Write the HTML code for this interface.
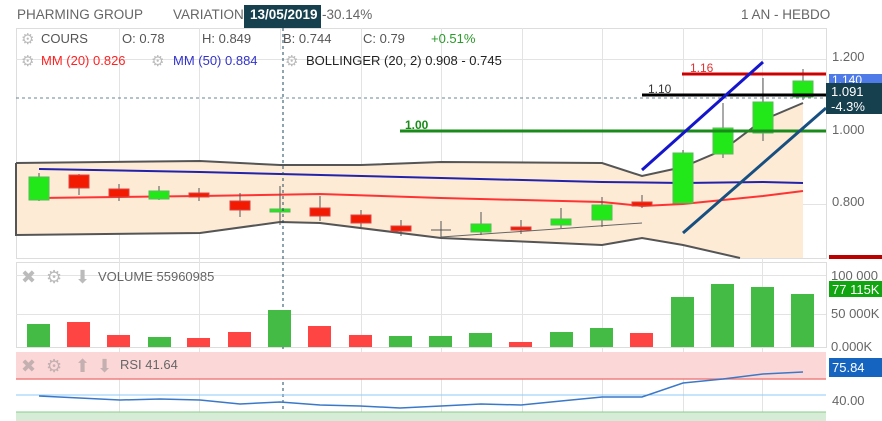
<!DOCTYPE html>
<html><head><meta charset="utf-8"><style>
body{margin:0;width:882px;height:421px;overflow:hidden;background:#fff;font-family:"Liberation Sans",sans-serif}
svg{position:absolute;left:0;top:0}
text{font-family:"Liberation Sans",sans-serif}
</style></head><body>
<svg width="882" height="421" viewBox="0 0 882 421" xmlns="http://www.w3.org/2000/svg">
<!-- header -->
<text x="17" y="19" font-size="13.5" fill="#666">PHARMING GROUP</text>
<text x="173" y="19" font-size="13.5" fill="#666">VARIATION</text>
<rect x="244" y="5" width="77" height="23" fill="#17404f"/>
<text x="250" y="19" font-size="13.5" font-weight="bold" fill="#fff">13/05/2019</text>
<text x="322" y="19" font-size="13.5" fill="#666">-30.14%</text>
<text x="741" y="19" font-size="13.5" fill="#666">1 AN - HEBDO</text>

<g fill="none" stroke="#ddd" stroke-width="1">
<rect x="16.5" y="28.5" width="810" height="230"/>
<rect x="16.5" y="262.5" width="810" height="85"/>
</g>
<g stroke="#e3e3e3" stroke-width="1">
<line x1="119.5" y1="28" x2="119.5" y2="421"/><line x1="199.5" y1="28" x2="199.5" y2="421"/>
<line x1="361.5" y1="28" x2="361.5" y2="421"/><line x1="441.5" y1="28" x2="441.5" y2="421"/>
<line x1="522.5" y1="28" x2="522.5" y2="421"/><line x1="602.5" y1="28" x2="602.5" y2="421"/>
<line x1="683.5" y1="28" x2="683.5" y2="421"/><line x1="762.5" y1="28" x2="762.5" y2="421"/>
<line x1="16" y1="59.5" x2="826" y2="59.5"/><line x1="16" y1="204.5" x2="826" y2="204.5"/>
<line x1="16" y1="275.5" x2="826" y2="275.5"/><line x1="16" y1="314.5" x2="826" y2="314.5"/>
</g>
<g stroke="#e3e3e3"><line x1="280.5" y1="28" x2="280.5" y2="50"/></g>
<g font-size="13">
<text x="21" y="44" font-size="15" fill="#bbb">⚙</text><text x="41" y="43" fill="#555">COURS</text>
<text x="122" y="43" fill="#555">O: 0.78</text>
<text x="202" y="43" fill="#555">H: 0.849</text>
<text x="283" y="43" fill="#555">B: 0.744</text>
<text x="363" y="43" fill="#555">C: 0.79</text>
<text x="431" y="43" fill="#2a9a2a">+0.51%</text>
<text x="21" y="66" font-size="15" fill="#bbb">⚙</text><text x="41" y="65" fill="#f22">MM (20) 0.826</text>
<text x="151" y="66" font-size="15" fill="#bbb">⚙</text><text x="173" y="65" fill="#33c">MM (50) 0.884</text>
<text x="285" y="66" font-size="15" fill="#bbb">⚙</text><text x="306" y="65" fill="#222">BOLLINGER (20, 2) 0.908 - 0.745</text>
</g>

<polygon points="16,163 200,161 280,165 361,165 441,162 602,163 642,176 683,167 723,150 763,120 803,103 803,258 740,258 683,245 642,238 602,245 441,238 320,223 280,222 200,233 16,235" fill="#fdebd6"/>
<polyline points="16,163 200,161 280,165 361,165 441,162 602,163 642,176 683,167 723,150 763,120 803,103" fill="none" stroke="#555" stroke-width="2"/>
<polyline points="16,163 16,235 200,233 280,222 320,223 441,238 602,245 642,238 683,245 740,258" fill="none" stroke="#555" stroke-width="2"/>
<polyline points="39,169 200,172 280,174 441,178 602,182 683,183 763,182 803,183" fill="none" stroke="#2222aa" stroke-width="2"/>
<polyline points="39,198 200,196 320,194 441,198 602,202 642,206 683,204 763,196 803,191" fill="none" stroke="#f33" stroke-width="2"/>
<line x1="441" y1="237" x2="642" y2="223" stroke="#666" stroke-width="1"/>

<g stroke="#555" stroke-width="1">
<line x1="39" y1="173" x2="39" y2="201"/><line x1="79" y1="174" x2="79" y2="195"/><line x1="119" y1="184" x2="119" y2="201"/><line x1="159" y1="186" x2="159" y2="200"/><line x1="199" y1="188" x2="199" y2="201"/><line x1="240" y1="193" x2="240" y2="217"/><line x1="280" y1="186" x2="280" y2="225"/><line x1="320" y1="196" x2="320" y2="221"/><line x1="361" y1="210" x2="361" y2="228"/><line x1="401" y1="220" x2="401" y2="236"/><line x1="441" y1="221" x2="441" y2="238"/><line x1="431" y1="230" x2="451" y2="230"/><line x1="481" y1="212" x2="481" y2="235"/><line x1="521" y1="220" x2="521" y2="234"/><line x1="561" y1="208" x2="561" y2="228"/><line x1="602" y1="197" x2="602" y2="227"/><line x1="642" y1="195" x2="642" y2="208"/><line x1="683" y1="150" x2="683" y2="203"/><line x1="723" y1="103" x2="723" y2="158"/><line x1="763" y1="78" x2="763" y2="141"/><line x1="803" y1="69" x2="803" y2="100"/>
</g>
<g stroke-width="1">
<g fill="#22e81a" stroke="#55bb55">
<rect x="29" y="177" width="20" height="23"/><rect x="149" y="191" width="20" height="8"/><rect x="270" y="209" width="20" height="3"/><rect x="471" y="224" width="20" height="8"/><rect x="551" y="219" width="20" height="6"/><rect x="592" y="205" width="20" height="15"/><rect x="673" y="153" width="20" height="50"/><rect x="713" y="128" width="20" height="26"/><rect x="753" y="102" width="20" height="31"/><rect x="793" y="81" width="20" height="16"/>
</g>
<g fill="#f21a00" stroke="#d44">
<rect x="69" y="175" width="20" height="13"/><rect x="109" y="189" width="20" height="8"/><rect x="189" y="193" width="20" height="4"/><rect x="230" y="201" width="20" height="9"/><rect x="310" y="208" width="20" height="8"/><rect x="351" y="215" width="20" height="8"/><rect x="391" y="226" width="20" height="5"/><rect x="511" y="227" width="20" height="3"/><rect x="632" y="202" width="20" height="4"/>
</g></g>

<line x1="16" y1="98" x2="826" y2="98" stroke="#6a8594" stroke-width="1" stroke-dasharray="3,3"/>
<line x1="682" y1="74" x2="826" y2="74" stroke="#c00" stroke-width="3"/>
<line x1="642" y1="95" x2="826" y2="95" stroke="#000" stroke-width="3"/>
<line x1="400" y1="131" x2="826" y2="131" stroke="#1a8a1a" stroke-width="3"/>
<text x="690" y="72" font-size="12" fill="#d33">1.16</text>
<text x="648" y="93" font-size="12" fill="#333">1.10</text>
<text x="405" y="129" font-size="12" fill="#1a8a1a" font-weight="bold">1.00</text>
<line x1="642" y1="170" x2="763" y2="62" stroke="#1515cc" stroke-width="3"/>
<line x1="683" y1="233" x2="826" y2="108" stroke="#174f80" stroke-width="3"/>

<g font-size="13" fill="#666">
<text x="832" y="61">1.200</text><text x="832" y="134">1.000</text><text x="832" y="206">0.800</text>
</g>
<rect x="829" y="74" width="53" height="10" fill="#4f7be8"/>
<text x="832" y="84" font-size="12" fill="#fff">1.140</text>
<rect x="826" y="83" width="56" height="31" fill="#17404f"/>
<text x="831" y="96" font-size="13" fill="#fff">1.091</text>
<text x="831" y="111" font-size="13" fill="#fff">-4.3%</text>
<rect x="829" y="255" width="53" height="4" fill="#b00"/>

<line x1="283" y1="28" x2="283" y2="421" stroke="#1e4a5c" stroke-width="1" stroke-dasharray="3,3"/>

<g font-size="18" fill="#bbb"><text x="21" y="283">✖</text><text x="46" y="283">⚙</text><text x="75" y="283">⬇</text></g>
<text x="98" y="281" font-size="13" fill="#666">VOLUME  55960985</text>
<g fill="#44bb44">
<rect x="27" y="324" width="23" height="23"/><rect x="148" y="337" width="23" height="10"/><rect x="268" y="310" width="23" height="37"/><rect x="389" y="336" width="23" height="11"/><rect x="429" y="336" width="23" height="11"/><rect x="469" y="333" width="23" height="14"/><rect x="550" y="332" width="23" height="15"/><rect x="590" y="328" width="23" height="19"/><rect x="671" y="297" width="23" height="50"/><rect x="711" y="284" width="23" height="63"/><rect x="751" y="287" width="23" height="60"/><rect x="791" y="294" width="23" height="53"/>
</g>
<g fill="#ff4444">
<rect x="67" y="322" width="23" height="25"/><rect x="107" y="335" width="23" height="12"/><rect x="187" y="338" width="23" height="9"/><rect x="228" y="332" width="23" height="15"/><rect x="308" y="326" width="23" height="21"/><rect x="349" y="335" width="23" height="12"/><rect x="509" y="342" width="23" height="5"/><rect x="630" y="333" width="23" height="14"/>
</g>
<g font-size="13" fill="#666"><text x="831" y="280">100 000</text><text x="831" y="318">50 000K</text><text x="831" y="351">0.000K</text></g>
<rect x="829" y="281" width="53" height="16" fill="#11a511"/>
<text x="832" y="294" font-size="13" fill="#fff">77 115K</text>

<rect x="16" y="352" width="810" height="27" fill="#fcd7d7"/>
<line x1="16" y1="379" x2="826" y2="379" stroke="#f08080" stroke-width="1.5"/>
<line x1="16" y1="395" x2="826" y2="395" stroke="#8cc8f8" stroke-width="1"/>
<rect x="16" y="412" width="810" height="9" fill="#d7ecd7"/>
<line x1="16" y1="412" x2="826" y2="412" stroke="#8c8" stroke-width="1"/>
<g font-size="18" fill="#c4b0b0"><text x="21" y="372">✖</text><text x="46" y="372">⚙</text><text x="75" y="372">⬆</text><text x="97" y="372">⬇</text></g>
<text x="120" y="369" font-size="13" fill="#666">RSI  41.64</text>
<polyline points="39,396 120,400 160,399 200,400 240,404 280,402 320,405 360,406 400,408 441,406 481,404 521,405 561,401 602,397 642,397 683,383 723,379 763,374 803,372" fill="none" stroke="#3a78c8" stroke-width="1.5"/>
<rect x="829" y="358" width="53" height="19" fill="#1565c0"/>
<text x="832" y="372" font-size="13" fill="#fff">75.84</text>
<text x="832" y="405" font-size="13" fill="#666">40.00</text>
</svg>
</body></html>
